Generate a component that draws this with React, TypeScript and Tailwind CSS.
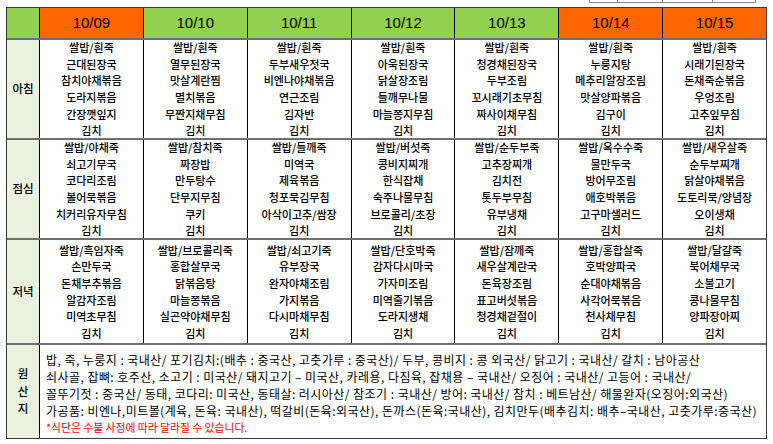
const days = [
  { date: "10/09", holiday: true },
  { date: "10/10", holiday: false },
  { date: "10/11", holiday: false },
  { date: "10/12", holiday: false },
  { date: "10/13", holiday: false },
  { date: "10/14", holiday: true },
  { date: "10/15", holiday: true },
];

const meals: { label: string; height: string; menus: string[][] }[] = [
  {
    label: "아침",
    height: "h-[100px]",
    menus: [
      ["쌀밥/흰죽", "근대된장국", "참치야채볶음", "도라지볶음", "간장깻잎지", "김치"],
      ["쌀밥/흰죽", "열무된장국", "맛살계란찜", "멸치볶음", "무짠지채무침", "김치"],
      ["쌀밥/흰죽", "두부새우젓국", "비엔나야채볶음", "연근조림", "김자반", "김치"],
      ["쌀밥/흰죽", "아욱된장국", "닭살장조림", "들깨무나물", "마늘쫑지무침", "김치"],
      ["쌀밥/흰죽", "청경채된장국", "두부조림", "꼬시래기초무침", "짜사이채무침", "김치"],
      ["쌀밥/흰죽", "누룽지탕", "메추리알장조림", "맛살양파볶음", "김구이", "김치"],
      ["쌀밥/흰죽", "시래기된장국", "돈채죽순볶음", "우엉조림", "고추잎무침", "김치"],
    ],
  },
  {
    label: "점심",
    height: "h-[100px]",
    menus: [
      ["쌀밥/야채죽", "쇠고기무국", "코다리조림", "볼어묵볶음", "치커리유자무침", "김치"],
      ["쌀밥/참치죽", "짜장밥", "만두탕수", "단무지무침", "쿠키", "김치"],
      ["쌀밥/들깨죽", "미역국", "제육볶음", "청포묵김무침", "아삭이고추/쌈장", "김치"],
      ["쌀밥/버섯죽", "콩비지찌개", "한식잡채", "숙주나물무침", "브로콜리/초장", "김치"],
      ["쌀밥/순두부죽", "고추장찌개", "김치전", "톳두부무침", "유부냉채", "김치"],
      ["쌀밥/옥수수죽", "물만두국", "방어무조림", "애호박볶음", "고구마샐러드", "김치"],
      ["쌀밥/새우살죽", "순두부찌개", "닭살야채볶음", "도토리묵/양념장", "오이생채", "김치"],
    ],
  },
  {
    label: "저녁",
    height: "h-[105px]",
    menus: [
      ["쌀밥/흑임자죽", "손만두국", "돈채부추볶음", "알감자조림", "미역초무침", "김치"],
      ["쌀밥/브로콜리죽", "홍합살무국", "닭볶음탕", "마늘쫑볶음", "실곤약야채무침", "김치"],
      ["쌀밥/쇠고기죽", "유부장국", "완자야채조림", "가지볶음", "다시마채무침", "김치"],
      ["쌀밥/단호박죽", "감자다시마국", "가자미조림", "미역줄기볶음", "도라지생채", "김치"],
      ["쌀밥/잠깨죽", "새우살계란국", "돈육장조림", "표고버섯볶음", "청경채겉절이", "김치"],
      ["쌀밥/홍합살죽", "호박양파국", "순대야채볶음", "사각어묵볶음", "천사채무침", "김치"],
      ["쌀밥/달걀죽", "북어채무국", "소불고기", "콩나물무침", "양파장아찌", "김치"],
    ],
  },
];

const origins = [
  "밥, 죽, 누룽지 : 국내산/ 포기김치:(배추 : 중국산, 고춧가루 : 중국산)/ 두부, 콩비지 : 콩 외국산/ 닭고기 : 국내산/ 갈치 : 남아공산",
  "쇠사골, 잡뼈: 호주산, 소고기 : 미국산/ 돼지고기 – 미국산, 카레용, 다짐육, 잡채용 – 국내산/ 오징어 : 국내산/ 고등어 : 국내산/",
  "꼴뚜기젓 : 중국산/ 동태, 코다리: 미국산, 동태살: 러시아산/ 참조기 : 국내산/ 방어: 국내산/ 참치 : 베트남산/ 해물완자(오징어:외국산)",
  "가공품: 비엔나,미트볼(계육, 돈육: 국내산), 떡갈비(돈육:외국산), 돈까스(돈육:국내산), 김치만두(배추김치: 배추–국내산, 고춧가루:중국산)",
];

const kr = { fontFamily: '"Noto Sans CJK KR", "Noto Sans", sans-serif' };

export default function App() {
  return (
    <div className="w-[773px] h-[444px] bg-white overflow-hidden" style={kr}>
      {/* leftover cells of the table above */}
      <div className="flex h-[3px] ml-[589px] w-[167px] border-x border-b border-[#8a8a8a]">
        <div className="w-[28px] border-r border-[#8a8a8a]" />
        <div className="w-[45px] border-r border-[#8a8a8a]" />
        <div className="w-[50px] border-r border-[#8a8a8a]" />
        <div className="flex-1" />
      </div>

      <div className="mt-[4px] ml-[6px] w-[761px] border border-[#3a3a3a] text-black">
        {/* header */}
        <div className="flex h-[30px]">
          <div className="w-[32px] bg-[#92D050]" />
          {days.map((d) => (
            <div
              key={d.date}
              className={`flex-1 flex items-center justify-center border-l border-black text-[15px] ${
                d.holiday ? "bg-[#FF6600]" : "bg-[#92D050]"
              }`}
              style={{ fontFamily: '"Liberation Sans", Arial, sans-serif' }}
            >
              {d.date}
            </div>
          ))}
        </div>

        {/* meals */}
        {meals.map((m) => (
          <div
            key={m.label}
            className={`flex ${m.height} border-t-2 border-[#6e6e6e]`}
          >
            <div className="w-[32px] bg-[#EBF1DE] flex items-center justify-center text-[11.5px] font-medium">
              {m.label}
            </div>
            {m.menus.map((items, i) => (
              <div
                key={i}
                className="flex-1 flex flex-col items-center justify-center border-l border-black text-[11px] font-medium leading-[16.6px] whitespace-nowrap"
              >
                {items.map((it, j) => (
                  <div key={j}>{it}</div>
                ))}
              </div>
            ))}
          </div>
        ))}

        {/* origin */}
        <div className="flex h-[95px] border-t-2 border-[#6e6e6e]">
          <div className="w-[32px] bg-[#EBF1DE] flex flex-col items-center justify-center text-[11.5px] font-medium leading-[17.5px]">
            <span>원</span>
            <span>산</span>
            <span>지</span>
          </div>
          <div className="flex-1 border-l border-black pl-[6px] pt-[6px] text-[12px] tracking-[0.45px] leading-[17px] whitespace-nowrap">
            {origins.map((o, i) => (
              <div key={i}>{o}</div>
            ))}
            <div className="text-[10.8px] tracking-normal text-[#FF0000]">
              *식단은 수불 사정에 따라 달라질 수 있습니다.
            </div>
          </div>
        </div>
      </div>
    </div>
  );
}
